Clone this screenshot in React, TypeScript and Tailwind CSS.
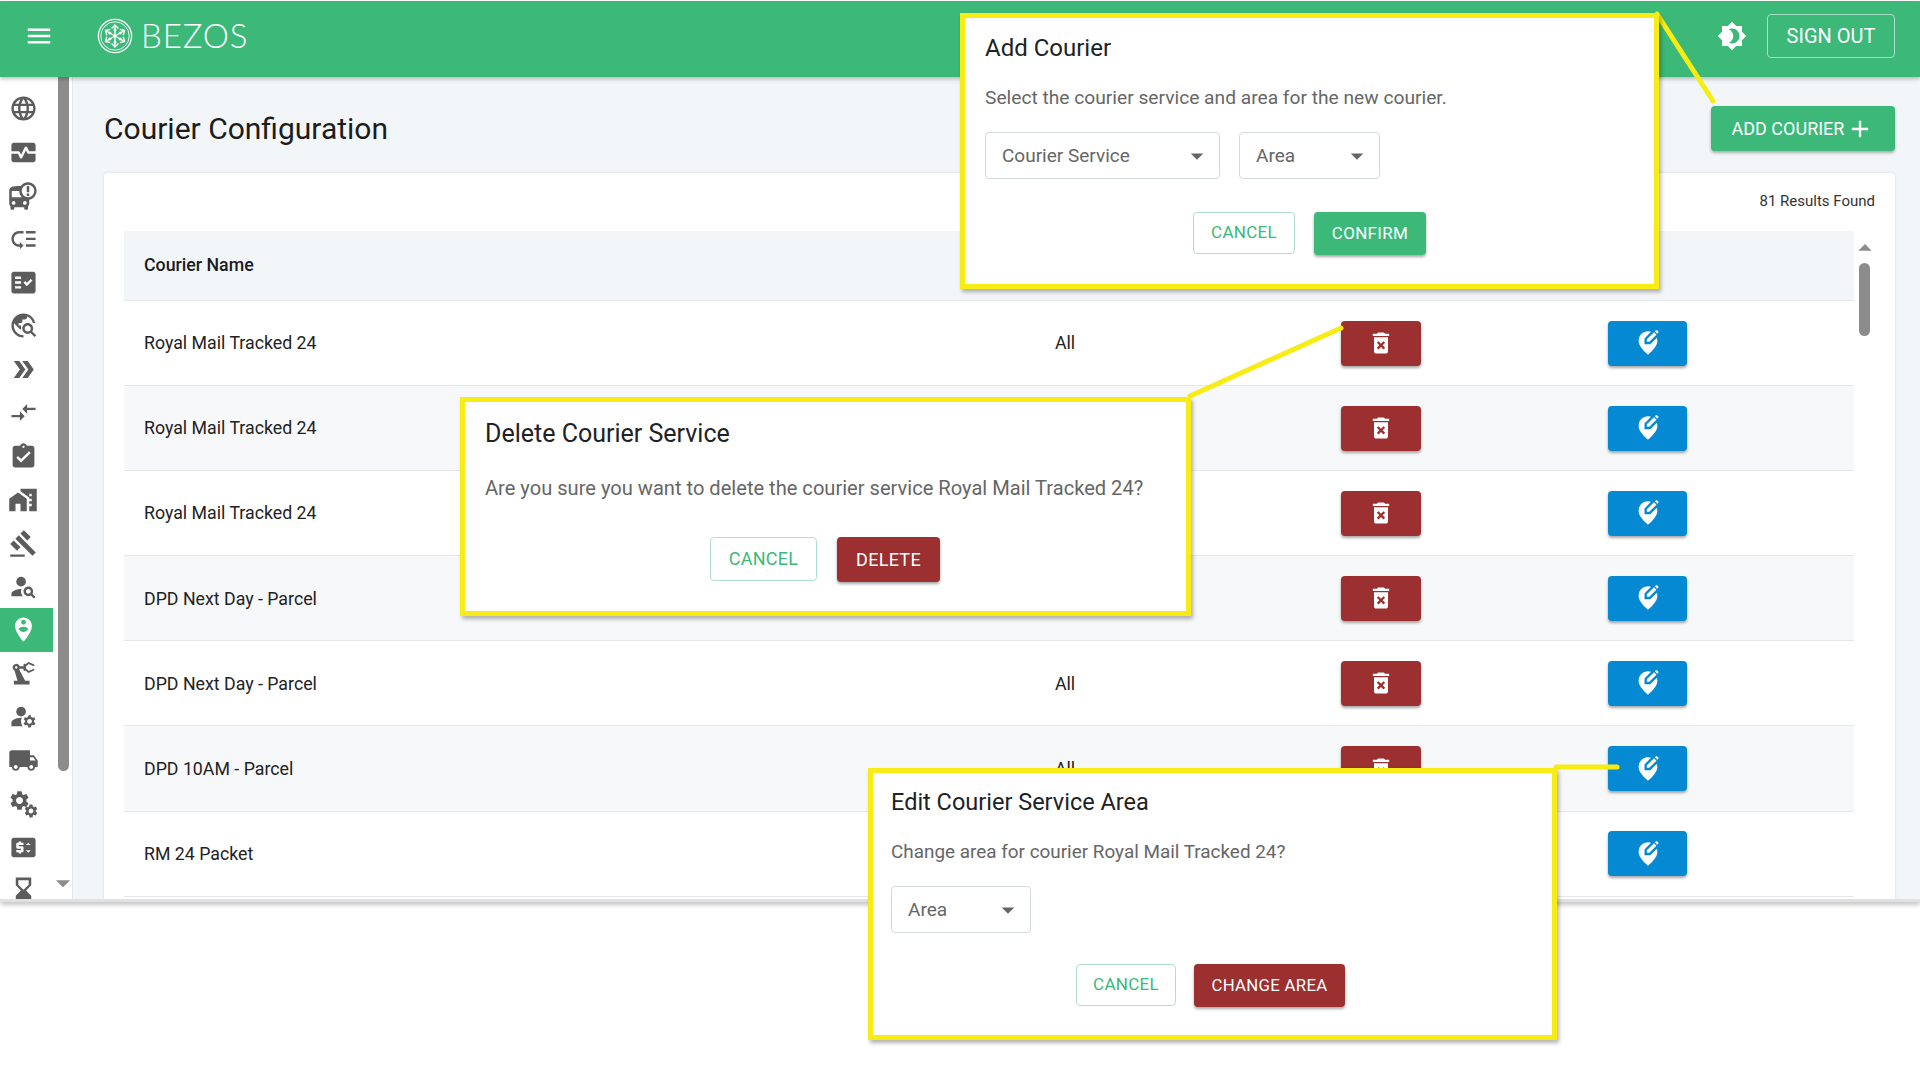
import {
  MdLanguage, MdMonitorHeart, MdBusAlert, MdLowPriority, MdFactCheck, MdTravelExplore, MdDoubleArrow,
  MdCompareArrows, MdAssignmentTurnedIn, MdMapsHomeWork, MdGavel, MdPersonSearch, MdPersonPinCircle,
  MdPrecisionManufacturing, MdManageAccounts, MdLocalShipping, MdPriceChange, MdHourglassBottom,
  MdMenu, MdBrightness4, MdAdd, MdDeleteForever, MdEditLocationAlt, MdArrowDropDown, MdArrowDropUp, MdSettings,
} from "react-icons/md"

const font = "font-['Roboto',sans-serif]"

function Gears() {
  return (
    <span className="relative block h-[28px] w-[28px]">
      <MdSettings className="absolute left-[-1px] top-[-1px]" size={23} />
      <MdSettings className="absolute bottom-[-1px] right-[-2px]" size={16} />
    </span>
  )
}

const navIcons = [
  <MdLanguage size={29} />, <MdMonitorHeart size={29} />, <MdBusAlert size={30} />, <MdLowPriority size={29} />,
  <MdFactCheck size={29} />, <MdTravelExplore size={29} />, <MdDoubleArrow size={29} />, <MdCompareArrows size={29} />,
  <MdAssignmentTurnedIn size={29} />, <MdMapsHomeWork size={30} />, <MdGavel size={29} />, <MdPersonSearch size={29} />,
  <MdPersonPinCircle size={29} />, <MdPrecisionManufacturing size={29} />, <MdManageAccounts size={29} />, <MdLocalShipping size={31} />,
  <Gears />, <MdPriceChange size={29} />, <MdHourglassBottom size={31} />,
]

const rows = [
  "Royal Mail Tracked 24", "Royal Mail Tracked 24", "Royal Mail Tracked 24", "DPD Next Day - Parcel",
  "DPD Next Day - Parcel", "DPD 10AM - Parcel", "RM 24 Packet",
]

function Logo() {
  const spokes = [0, 60, 120, 180, 240, 300]
  return (
    <svg width="36" height="36" viewBox="0 0 36 36" fill="none" stroke="white">
      <circle cx="18" cy="18" r="16.6" strokeWidth="1.3" />
      <circle cx="18" cy="18" r="14.2" strokeWidth="0.9" />
      {spokes.map((a) => (
        <g key={a} transform={`rotate(${a} 18 18)`}>
          <path d="M18 18V7.5" strokeWidth="1.4" />
          <path d="M14.6 10.5 18 7l3.4 3.5" strokeWidth="1.4" />
          <circle cx="18" cy="12" r="1.5" fill="white" stroke="none" />
        </g>
      ))}
    </svg>
  )
}

function Select({ label, className }: { label: string; className: string }) {
  return (
    <div className={`flex h-[47px] items-center justify-between rounded border border-[#d5dbd9] pl-4 pr-[7px] text-[19px] text-[#666] ${className}`}>
      <span className="pt-[2px]">{label}</span>
      <MdArrowDropDown size={30} className="text-[#666]" />
    </div>
  )
}

function OutlineButton({ className = "" }: { className?: string }) {
  return (
    <button className={`flex items-center justify-center rounded border border-[#b0e0cb] bg-white tracking-[0.3px] text-[#3cb878] ${className}`}>
      CANCEL
    </button>
  )
}

function SolidButton({ label, className }: { label: string; className: string }) {
  return (
    <button className={`flex items-center justify-center rounded tracking-[0.3px] text-white shadow-[0_2px_3px_rgba(0,0,0,0.35)] ${className}`}>
      {label}
    </button>
  )
}

function Callout({ className, children }: { className: string; children: React.ReactNode }) {
  return (
    <div className={`absolute z-20 border-[5px] border-[#f7ec13] bg-white shadow-[2px_3px_4px_rgba(0,0,0,0.3)] ${className}`}>
      {children}
    </div>
  )
}

export default function App() {
  return (
    <div className={`relative h-[1080px] w-[1920px] overflow-hidden bg-white ${font}`}>
      <div className="flex h-[902px] flex-col overflow-hidden rounded-bl border-b-[3px] border-[#dfe1e3] pt-[1px] shadow-[0_3px_4px_rgba(0,0,0,0.22)]">
        <header className="relative z-10 flex h-[76px] shrink-0 items-center bg-[#3cb878] pb-[6px] pl-[24px] pr-[25px] shadow-[0_2px_4px_rgba(0,0,0,0.25)]">
          <MdMenu size={30} className="text-white" />
          <div className="ml-[43px] flex items-center gap-[8px]">
            <Logo />
            <span className="mt-[-2px] font-['Lato',sans-serif] text-[33px] font-light leading-none tracking-[0.9px] text-white">BEZOS</span>
          </div>
          <div className="ml-auto flex items-center gap-[20px]">
            <MdBrightness4 size={30} className="text-white" />
            <button className="flex h-[44px] w-[128px] items-center justify-center rounded border border-[#a5dfc3] text-[20px] text-white">SIGN OUT</button>
          </div>
        </header>

        <div className="flex min-h-0 flex-1">
          <aside className="flex w-[73px] shrink-0 bg-white">
            <nav className="w-[53px] shrink-0 overflow-hidden pt-[10px] text-[#5c5c5c]">
              {navIcons.map((icon, i) => (
                <div key={i} className={`flex h-[43.45px] items-center justify-center pr-[7px] ${i === 12 ? "bg-[#3cb878] text-white" : ""}`}>
                  {icon}
                </div>
              ))}
            </nav>
            <div className="relative w-[20px] border-r border-[#e4e7ea]">
              <div className="ml-[5px] h-[694px] w-[11px] rounded-b-[6px] bg-[#8c8c8c]" />
              <MdArrowDropDown size={34} className="absolute left-[-7px] top-[789px] text-[#8c8c8c]" />
            </div>
          </aside>

          <main className="min-w-0 flex-1 bg-[#f3f6f9] pl-[31px] pr-[25px]">
            <div className="flex h-[96px] items-center justify-between pt-[5px]">
              <h1 className="mt-[1px] text-[30px] font-normal text-[#1c1c1c]">Courier Configuration</h1>
              <button className="mt-[2px] flex h-[45px] w-[184px] items-center justify-center gap-[2px] rounded bg-[#3cb878] text-[18px] text-white shadow-[0_2px_3px_rgba(0,0,0,0.3)]">
                ADD COURIER <MdAdd size={28} />
              </button>
            </div>

            <section className="h-[760px] rounded-t bg-white px-[20px] shadow-[0_0_3px_rgba(0,0,0,0.12)]">
              <p className="flex h-[56px] items-center justify-end text-[15px] text-[#333]">81 Results Found</p>
              <div className="mt-[2px] flex">
                <div className="min-w-0 flex-1">
                  <div className="flex h-[70px] items-center border-b border-[#e5e7ea] bg-[#f3f6f9] pl-[20px] text-[17.75px] font-medium text-[#1c1c1c]">
                    Courier Name
                  </div>
                  {rows.map((name, i) => (
                    <div key={i} className={`flex h-[85.1px] items-center border-b border-[#e5e7ea] pl-[20px] text-[17.75px] text-[#222] ${i % 2 ? "bg-[#f7f8fa]" : "bg-white"}`}>
                      <span className="w-[907px] pt-[1px]">{name}</span>
                      <span className="w-[28px] pt-[1px] text-center">All</span>
                      <button className="ml-[262px] flex h-[45px] w-[80px] items-center justify-center rounded bg-[#9c2f2f] text-white shadow-[0_2px_3px_rgba(0,0,0,0.35)]">
                        <MdDeleteForever size={28} />
                      </button>
                      <button className="ml-[187px] flex h-[45px] w-[79px] items-center justify-center rounded bg-[#0689d3] text-white shadow-[0_2px_3px_rgba(0,0,0,0.35)]">
                        <MdEditLocationAlt size={28} />
                      </button>
                    </div>
                  ))}
                </div>
                <div className="relative w-[21px] shrink-0">
                  <MdArrowDropUp size={32} className="absolute left-[-5px] top-[1px] text-[#8c8c8c]" />
                  <div className="absolute left-[5px] top-[32px] h-[73px] w-[11px] rounded-[6px] bg-[#8c8c8c]" />
                </div>
              </div>
            </section>
          </main>
        </div>
      </div>

      {/* connector lines from the callouts to the buttons */}
      <svg className="absolute left-0 top-0 z-10" width="1920" height="1080" fill="none" stroke="#f7ec13" strokeWidth="5" strokeLinecap="round">
        <path d="M1657 14 1713 101" />
        <path d="M1190 396 1341 328" />
        <path d="M1556 767H1617" />
      </svg>

      <Callout className="left-[960px] top-[13px] h-[276px] w-[699px] pl-[20px] pt-[14px]">
        <h2 className="text-[24px] leading-[32px] text-[#222]">Add Courier</h2>
        <p className="mt-[22px] text-[19.2px] leading-[24px] text-[#666]">Select the courier service and area for the new courier.</p>
        <div className="mt-[22px] flex gap-[19px]">
          <Select label="Courier Service" className="w-[235px]" />
          <Select label="Area" className="w-[141px]" />
        </div>
        <div className="mt-[33px] ml-[208px] flex items-start gap-[19px]">
          <OutlineButton className="h-[42px] w-[102px] text-[17px]" />
          <SolidButton label="CONFIRM" className="h-[43px] w-[112px] bg-[#3cb878] text-[17px]" />
        </div>
      </Callout>

      <Callout className="left-[460px] top-[397px] h-[219px] w-[731px] pl-[20px] pt-[16px]">
        <h2 className="text-[25px] leading-[32px] text-[#222]">Delete Courier Service</h2>
        <p className="mt-[25px] text-[20.1px] leading-[26px] text-[#666]">Are you sure you want to delete the courier service Royal Mail Tracked 24?</p>
        <div className="mt-[36px] ml-[225px] flex items-start gap-[20px]">
          <OutlineButton className="h-[44px] w-[107px] pb-[2px] text-[18px]" />
          <SolidButton label="DELETE" className="h-[45px] w-[103px] bg-[#9c2f2f] pb-[1px] text-[18px]" />
        </div>
      </Callout>

      <Callout className="left-[868px] top-[768px] h-[272px] w-[689px] pl-[18px] pt-[13px]">
        <h2 className="text-[23.5px] leading-[32px] text-[#222]">Edit Courier Service Area</h2>
        <p className="mt-[22px] text-[18.9px] leading-[24px] text-[#666]">Change area for courier Royal Mail Tracked 24?</p>
        <div className="mt-[22px] flex">
          <Select label="Area" className="w-[140px]" />
        </div>
        <div className="mt-[31px] ml-[185px] flex items-start gap-[18px]">
          <OutlineButton className="h-[42px] w-[100px] text-[17px]" />
          <SolidButton label="CHANGE AREA" className="h-[43px] w-[151px] bg-[#9c2f2f] text-[16.75px] tracking-[0.1px]" />
        </div>
      </Callout>
    </div>
  )
}
